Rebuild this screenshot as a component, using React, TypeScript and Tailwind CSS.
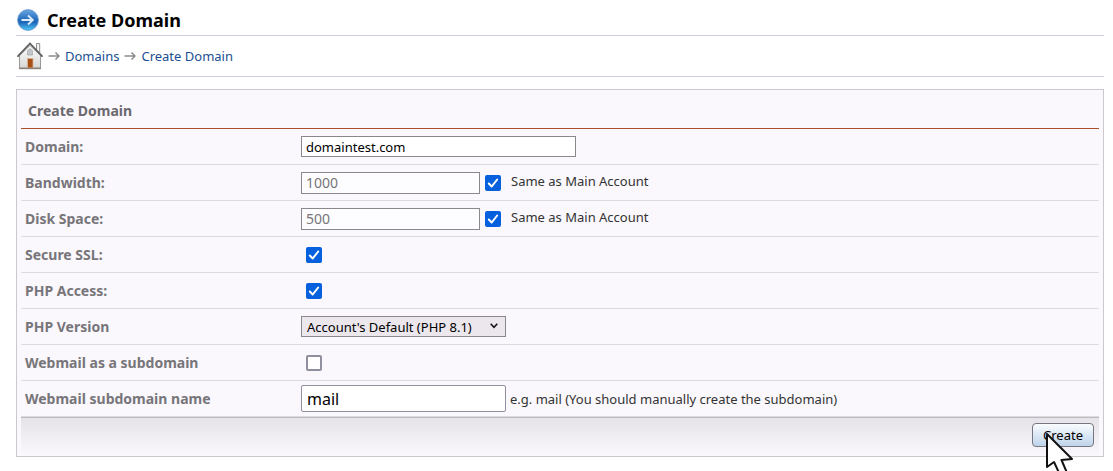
import React, { useState } from 'react';

const ArrowBadge = () => (
  <svg width="22" height="22" viewBox="0 0 22 22" aria-hidden="true">
    <defs>
      <linearGradient id="badge" x1="0" y1="0" x2="0" y2="1">
        <stop offset="0" stopColor="#6aa8e4" />
        <stop offset="0.45" stopColor="#2a70bd" />
        <stop offset="0.6" stopColor="#1b64b6" />
        <stop offset="1" stopColor="#4fc8fa" />
      </linearGradient>
    </defs>
    <circle cx="11" cy="11" r="10.4" fill="url(#badge)" stroke="#5f93cc" strokeWidth="0.8" />
    <path d="M4.5 11H15.500M11 6.500L15.800 11 11 15.500" fill="none" stroke="#dcebf9" strokeWidth="1.9" />
  </svg>
);

const HomeIcon = () => (
  <svg width="26" height="28" viewBox="0 0 26 28" aria-hidden="true">
    <defs>
      <linearGradient id="wall" x1="0" y1="0" x2="0" y2="1">
        <stop offset="0" stopColor="#ffffff" />
        <stop offset="1" stopColor="#d6d6d4" />
      </linearGradient>
    </defs>
    <path d="M19.5 1.500h3.200v10l-3.200-3z" fill="#f1f1f1" stroke="#858585" strokeWidth="0.9" />
    <path d="M2.500 13.500L13 3.500l10.500 10V26H2.500z" fill="url(#wall)" stroke="#8f8f8f" strokeWidth="0.9" />
    <path d="M13 1.500L1 14.200M13 1.500L25 14.200" fill="none" stroke="#5f5f5f" strokeWidth="1.8" strokeLinecap="round" />
    <path d="M10.500 13V8.500L13 6.500l2.500 2V13z" fill="#c3c6ca" stroke="#a5a5a5" strokeWidth="0.7" />
    <path d="M10.500 16.500h5.500V26h-5.500z" fill="#a84f16" stroke="#d7b49a" strokeWidth="0.8" />
    <path d="M2 26.500h22" stroke="#8b8175" strokeWidth="1.4" />
  </svg>
);

const CrumbArrow = () => (
  <svg width="12" height="10" viewBox="0 0 12 10" aria-hidden="true">
    <path d="M0.500 5H11M7.500 1.500L11 5 7.500 8.500" fill="none" stroke="#8c8c8c" strokeWidth="1.5" />
  </svg>
);

const Pointer = () => (
  <svg className="pointer-events-none absolute left-3 top-2" width="30" height="46" viewBox="-3 -3 30 46" aria-hidden="true">
    <path d="M0 0V33L7 28L14 43L20.500 40L14.500 26L25 25z" fill="#fff" stroke="#111" strokeWidth="2" strokeLinejoin="round" />
  </svg>
);

type CheckProps = {
  id: string;
  initial?: boolean;
};

const Check = ({ id, initial = false }: CheckProps) => {
  const [checked, setChecked] = useState(initial);

  return (
    <span className="relative flex size-4 shrink-0">
      <input
        id={id}
        type="checkbox"
        checked={checked}
        onChange={e => setChecked(e.target.checked)}
        className="size-4 appearance-none rounded-xs border-2 border-[#8f8f9d] bg-white checked:border-[#0560dd] checked:bg-[#0560dd]"
      />
      {checked && (
        <svg className="pointer-events-none absolute inset-0" width="16" height="16" viewBox="0 0 16 16" aria-hidden="true">
          <path d="M3.800 8.500l2.900 3 5.500-7" fill="none" stroke="#fff" strokeWidth="2" strokeLinecap="round" strokeLinejoin="round" />
        </svg>
      )}
    </span>
  );
};

type RowProps = {
  label: string;
  htmlFor: string;
  children: React.ReactNode;
};

const Row = ({ label, htmlFor, children }: RowProps) => (
  <tr className="h-9">
    <th scope="row" className="w-69 border-b border-[#dcdadf] px-1 py-0 text-left text-sm font-bold text-[#77757a]">
      <label htmlFor={htmlFor}>{label}</label>
    </th>
    <td className="border-b border-[#dcdadf] px-1 py-0">
      <div className="flex items-center">{children}</div>
    </td>
  </tr>
);

const App = () => {
  return (
    <main className="min-h-screen overflow-hidden bg-white pl-4 pr-[9px] font-['Noto_Sans',sans-serif] text-[13px] leading-5 text-[#333]">
      <header className="flex h-9 items-center gap-2 border-b border-[#cccce2] pl-px pt-1">
        <ArrowBadge />
        <h1 className="text-lg font-bold leading-6 text-black">Create Domain</h1>
      </header>

      <nav aria-label="Breadcrumb" className="flex h-[41px] items-center gap-[5px] border-b border-[#cccce2] pl-px text-[#1c4f91]">
        <a href="#home" aria-label="Home"><HomeIcon /></a>
        <CrumbArrow />
        <a href="#domains">Domains</a>
        <CrumbArrow />
        <a href="#create">Create Domain</a>
      </nav>

      <form className="mt-3 border border-[#cbc9ce] bg-[#faf8fc] px-1" onSubmit={e => e.preventDefault()}>
        <h2 className="border-b border-[#a94f2e] px-[7px] pb-[7px] pt-[11px] text-sm font-bold leading-5 text-[#6b696e]">Create Domain</h2>

        <table className="w-full border-separate border-spacing-0 border-b border-[#bcbabf]">
          <tbody>
            <Row label="Domain:" htmlFor="domain">
              <input id="domain" type="text" defaultValue="domaintest.com" className="h-[21px] w-[275px] border border-[#8a888d] bg-white px-1 text-black" />
            </Row>
            <Row label="Bandwidth:" htmlFor="bandwidth">
              <input id="bandwidth" type="text" defaultValue="1000" disabled className="mr-[5px] h-[22px] w-[179px] border border-[#8a888d] bg-[#fdfcfe] px-1 text-sm text-[#77757a]" />
              <Check id="bandwidth-same" initial />
              <label htmlFor="bandwidth-same" className="pb-1 pl-2.5">Same as Main Account</label>
            </Row>
            <Row label="Disk Space:" htmlFor="disk">
              <input id="disk" type="text" defaultValue="500" disabled className="mr-[5px] h-[22px] w-[179px] border border-[#8a888d] bg-[#fdfcfe] px-1 text-sm text-[#77757a]" />
              <Check id="disk-same" initial />
              <label htmlFor="disk-same" className="pb-1 pl-2.5">Same as Main Account</label>
            </Row>
            <Row label="Secure SSL:" htmlFor="ssl">
              <div className="pl-[5px]"><Check id="ssl" initial /></div>
            </Row>
            <Row label="PHP Access:" htmlFor="php">
              <div className="pl-[5px]"><Check id="php" initial /></div>
            </Row>
            <Row label="PHP Version" htmlFor="php-version">
              <div className="relative w-[205px]">
                <select id="php-version" className="block h-[21px] w-full appearance-none border border-[#8a888d] bg-[#ebe7ed] px-[5px] text-black">
                  <option>Account's Default (PHP 8.1)</option>
                </select>
                <svg className="pointer-events-none absolute right-2 top-[7px]" width="8" height="6" viewBox="0 0 8 6" aria-hidden="true">
                  <path d="M0.700 0.700L4 4.300 7.300 0.700" fill="none" stroke="#111" strokeWidth="1.500" />
                </svg>
              </div>
            </Row>
            <Row label="Webmail as a subdomain" htmlFor="webmail">
              <div className="pl-[5px]"><Check id="webmail" /></div>
            </Row>
            <Row label="Webmail subdomain name" htmlFor="webmail-name">
              <input id="webmail-name" type="text" defaultValue="mail" className="mr-1 h-[27px] w-[205px] rounded-xs border border-[#8f8f9d] bg-white px-[5px] text-base leading-6 text-black" />
              <span>e.g. mail (You should manually create the subdomain)</span>
            </Row>
          </tbody>
        </table>

        <div className="flex justify-end bg-linear-to-b from-[#e5e3e7] to-[#faf8fc] pb-[9px] pr-[5px] pt-[5px]">
          <div className="relative">
            <button type="submit" className="block h-6 rounded-sm border border-[#77757f] bg-linear-to-b from-[#fafcfe] to-[#bed4ea] px-2.5 text-black">Create</button>
            <Pointer />
          </div>
        </div>
      </form>
    </main>
  );
};

export default App;
